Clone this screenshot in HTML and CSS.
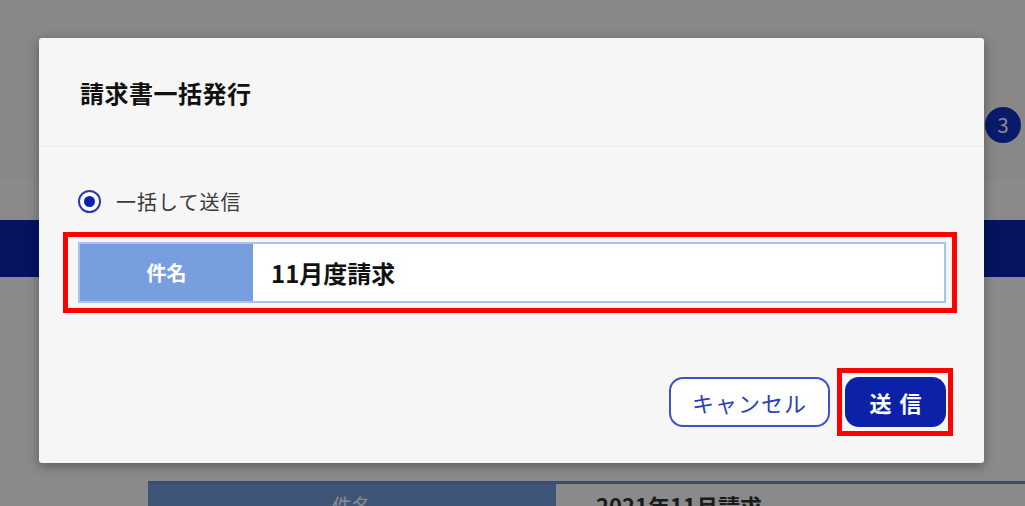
FILE: index.html
```html
<!DOCTYPE html>
<html lang="ja">

<head>
    <meta charset="UTF-8">
    <meta name="viewport" content="width=device-width, initial-scale=1.0">
    <title>請求書一括発行</title>
    <link rel="stylesheet" href="styles.css">
</head>

<body>
    <div class="page">
        <div class="topbar">
            <span class="badge">3</span>
        </div>
        <div class="navband"></div>
        <div class="table">
            <div class="th">件名</div>
            <div class="td">2021年11月請求</div>
        </div>
    </div>

    <div class="overlay">
        <div class="modal">
            <div class="modal-header">
                <h2>請求書一括発行</h2>
            </div>
            <div class="modal-body">
                <label class="radio">
                    <input type="radio" name="send" checked>
                    <span class="radio-mark"></span>
                    <span class="radio-text">一括して送信</span>
                </label>
                <div class="highlight row-highlight">
                    <div class="field">
                        <div class="field-label">件名</div>
                        <div class="field-input">11月度請求</div>
                    </div>
                </div>
            </div>
            <div class="modal-footer">
                <button class="btn btn-cancel">キャンセル</button>
                <div class="highlight btn-highlight">
                    <button class="btn btn-send">送信</button>
                </div>
            </div>
        </div>
    </div>
</body>

</html>
```

FILE: styles.css
```css
* {
    margin: 0;
    padding: 0;
    box-sizing: border-box;
    font-family: "Noto Sans CJK JP", "Noto Sans", sans-serif;
}

body {
    width: 1025px;
    height: 506px;
    overflow: hidden;
    position: relative;
    background: #ffffff;
}

/* page behind the dialog */
.page {
    height: 506px;
    overflow: hidden;
    background: #ffffff;
}

.topbar {
    height: 180px;
    background: #fcfcfc;
    display: flex;
    justify-content: flex-end;
    padding-top: 107px;
    padding-right: 4px;
}

.badge {
    width: 36px;
    height: 36px;
    border-radius: 50%;
    background: #1230c4;
    color: #ffffff;
    font-size: 20px;
    line-height: 36px;
    text-align: center;
}

.navband {
    margin-top: 40px;
    height: 57px;
    background: #0b24b4;
}

.table {
    margin-top: 204px;
    margin-left: 148px;
    display: flex;
    height: 25px;
    border-top: 3px solid #6f8fd8;
}

.th {
    width: 408px;
    background: #759dde;
    color: #ffffff;
    font-size: 20px;
    line-height: 20px;
    text-align: center;
    padding-top: 12px;
}

.td {
    flex: 1;
    background: #ffffff;
    color: #333333;
    font-size: 22px;
    line-height: 22px;
    font-weight: bold;
    padding: 10px 40px 0;
}

/* dialog */
.overlay {
    position: absolute;
    top: 0;
    left: 0;
    width: 1025px;
    height: 506px;
    background: rgba(0, 0, 0, 0.46);
}

.modal {
    position: absolute;
    top: 38px;
    left: 39px;
    width: 945px;
    height: 425px;
    background: #f6f6f6;
    border-radius: 3px;
    box-shadow: 0 3px 12px rgba(0, 0, 0, 0.35);
}

.modal-header {
    height: 109px;
    padding: 0 41px;
    display: flex;
    align-items: center;
    border-bottom: 1px solid #ececec;
}

.modal-header h2 {
    font-size: 24px;
    font-weight: bold;
    color: #111111;
    letter-spacing: 0.5px;
}

.modal-body {
    padding: 42px 27px 0 24px;
}

.radio {
    display: flex;
    align-items: center;
    height: 24px;
    margin-left: 15px;
    cursor: pointer;
}

.radio input {
    display: none;
}

.radio-mark {
    width: 23px;
    height: 23px;
    border-radius: 50%;
    border: 2px solid #2a3bb0;
    background: #ffffff;
    display: flex;
    align-items: center;
    justify-content: center;
}

.radio input:checked + .radio-mark::after {
    content: "";
    width: 11px;
    height: 11px;
    border-radius: 50%;
    background: #0b22a8;
}

.radio-text {
    margin-left: 15px;
    font-size: 20px;
    color: #3a3a3a;
    letter-spacing: 1px;
}

.highlight {
    border: 5px solid #ff0000;
}

.row-highlight {
    margin-top: 19px;
    padding: 5px 6px 5px 10px;
}

.field {
    display: flex;
    height: 61px;
    border: 2px solid #a9c3ee;
}

.field-label {
    width: 173px;
    background: #779fe0;
    color: #ffffff;
    font-size: 20px;
    font-weight: bold;
    display: flex;
    align-items: center;
    justify-content: center;
}

.field-input {
    flex: 1;
    background: #ffffff;
    font-size: 24px;
    font-weight: bold;
    color: #111111;
    display: flex;
    align-items: center;
    padding-left: 18px;
}

.modal-footer {
    margin-top: 55px;
    display: flex;
    justify-content: flex-end;
    align-items: center;
    padding-right: 31px;
}

.btn {
    height: 50px;
    border-radius: 14px;
    font-size: 22px;
    cursor: pointer;
}

.btn-cancel {
    width: 161px;
    background: #ffffff;
    border: 2px solid #3c52c6;
    color: #2b40b4;
    margin-right: 7px;
    letter-spacing: 1px;
}

.btn-highlight {
    padding: 4px 2px 4px 3px;
}

.btn-send {
    display: block;
    width: 101px;
    background: #0b22a8;
    border: none;
    color: #ffffff;
    font-weight: bold;
    letter-spacing: 8px;
    padding-left: 8px;
}
```
